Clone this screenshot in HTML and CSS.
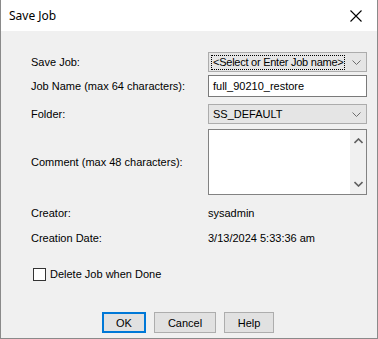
FILE: index.html
```html
<!DOCTYPE html>
<html>
<head>
<meta charset="utf-8">
<link rel="stylesheet" href="styles.css">
</head>
<body>
<div class="window">
  <div class="titlebar">
    <span class="title">Save Job</span>
    <svg class="close" width="12" height="12" viewBox="0 0 12 12"><path d="M0.5 0.5 L11.5 11.5 M11.5 0.5 L0.5 11.5" stroke="#000" stroke-width="1.1" fill="none"/></svg>
  </div>
  <div class="content">
    <div class="row r1">
      <span class="label">Save Job:</span>
      <div class="combo">
        <span class="combo-text focus">&lt;Select or Enter Job name&gt;</span>
        <svg class="chev" width="9" height="5" viewBox="0 0 9 5"><path d="M0.5 0.5 L4.5 4.5 L8.5 0.5" stroke="#6d6d6d" fill="none"/></svg>
      </div>
    </div>
    <div class="row r2">
      <span class="label">Job Name (max 64 characters):</span>
      <div class="input">full_90210_restore</div>
    </div>
    <div class="row r3">
      <span class="label">Folder:</span>
      <div class="combo">
        <span class="combo-text">SS_DEFAULT</span>
        <svg class="chev" width="9" height="5" viewBox="0 0 9 5"><path d="M0.5 0.5 L4.5 4.5 L8.5 0.5" stroke="#6d6d6d" fill="none"/></svg>
      </div>
    </div>
    <div class="row r4">
      <span class="label">Comment (max 48 characters):</span>
      <div class="textarea">
        <div class="ta-body"></div>
        <div class="scroll">
          <svg width="9" height="6" viewBox="0 0 9 6"><path d="M0.5 5 L4.5 1 L8.5 5" stroke="#606060" stroke-width="1.6" fill="none"/></svg>
          <svg width="9" height="6" viewBox="0 0 9 6"><path d="M0.5 1 L4.5 5 L8.5 1" stroke="#606060" stroke-width="1.6" fill="none"/></svg>
        </div>
      </div>
    </div>
    <div class="row r5">
      <span class="label">Creator:</span>
      <span class="value">sysadmin</span>
    </div>
    <div class="row r6">
      <span class="label">Creation Date:</span>
      <span class="value">3/13/2024 5:33:36 am</span>
    </div>
    <div class="row r7">
      <span class="checkbox"></span>
      <span class="cb-label">Delete Job when Done</span>
    </div>
    <div class="buttons">
      <button class="btn ok">OK</button>
      <button class="btn cancel">Cancel</button>
      <button class="btn help">Help</button>
    </div>
  </div>
</div>
</body>
</html>
```
FILE: styles.css
```css
* { box-sizing: border-box; }
html, body { margin: 0; padding: 0; background: #fff; }
body { width: 378px; height: 339px; overflow: hidden; }
.window {
  width: 378px;
  height: 339px;
  border-left: 1px solid #8a8a8a;
  border-right: 1px solid #8a8a8a;
  border-bottom: 1px solid #8a8a8a;
  display: flex;
  flex-direction: column;
  font-family: "Liberation Sans", Arial, sans-serif;
  font-size: 11px;
  color: #000;
  white-space: nowrap;
}
.titlebar {
  height: 31px;
  background: #fff;
  display: flex;
  align-items: center;
  justify-content: space-between;
  padding: 0 15px 0 8px;
}
.title {
  font-family: "Noto Sans", "Open Sans", sans-serif;
  font-size: 12px;
  color: #000;
}
.close { display: block; }
.content {
  flex: 1;
  background: #f0f0f0;
  padding: 21px 0 0 30px;
  display: flex;
  flex-direction: column;
}
.row {
  display: flex;
  align-items: center;
}
.label { width: 177px; flex: none; }
.r1 { height: 20px; }
.r2 { height: 22px; margin-top: 3px; }
.r3 { height: 20px; margin-top: 7px; }
.r4 { height: 66px; margin-top: 5px; }
.r5 { height: 14px; margin-top: 11px; }
.r6 { height: 14px; margin-top: 11px; }
.r7 { height: 14px; margin-top: 22px; }
.combo {
  width: 159px;
  height: 20px;
  background: #e5e5e5;
  border: 1px solid #acacac;
  display: flex;
  align-items: center;
  padding: 0 5px 0 2px;
  justify-content: space-between;
}
.combo-text { padding: 1px 2px; line-height: 13px; }
.combo-text.focus { border: 1px dotted #000; padding: 0 1px; letter-spacing: -0.25px; }
.chev { display: block; flex: none; }
.input {
  width: 159px;
  height: 22px;
  background: #fff;
  border: 1px solid #7a7a7a;
  padding: 0 4px;
  display: flex;
  align-items: center;
}
.textarea {
  width: 159px;
  height: 66px;
  background: #fff;
  border: 1px solid #828282;
  display: flex;
}
.ta-body { flex: 1; }
.scroll {
  width: 16px;
  background: #f0f0f0;
  display: flex;
  flex-direction: column;
  justify-content: space-between;
  align-items: center;
  padding: 8px 0 7px;
}
.scroll svg { display: block; }
.checkbox {
  width: 13px;
  height: 13px;
  background: #fff;
  border: 1px solid #333;
  margin-left: 2px;
  margin-right: 4px;
}
.buttons {
  display: flex;
  gap: 8px;
  margin-top: 31px;
  padding-left: 71px;
}
.btn {
  font-family: "Liberation Sans", Arial, sans-serif;
  font-size: 11px;
  height: 21px;
  background: #e1e1e1;
  border: 1px solid #adadad;
  color: #000;
  padding: 0;
  margin: 0;
}
.ok { width: 44px; border: 2px solid #0078d7; }
.cancel { width: 62px; }
.help { width: 50px; }
```
